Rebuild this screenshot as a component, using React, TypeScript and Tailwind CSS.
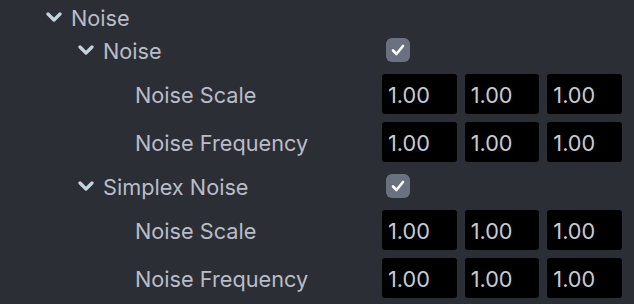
import React from 'react';

const Chevron = () => (
  <svg width="16" height="10" viewBox="0 0 16 10" className="shrink-0">
    <path d="M2 2 L8 8 L14 2" fill="none" stroke="#c5d3df" strokeWidth="3.2" strokeLinecap="round" strokeLinejoin="round" />
  </svg>
);

const Checkbox = () => (
  <div className="ml-1 flex h-6 w-6 items-center justify-center rounded-[6px] bg-[#6c7181]">
    <svg width="14" height="12" viewBox="0 0 14 12">
      <path d="M2 6.5 L5.5 10 L12 2" fill="none" stroke="#ffffff" strokeWidth="2.6" strokeLinecap="round" strokeLinejoin="round" />
    </svg>
  </div>
);

const Group = ({ label, indent }: { label: string; indent: string }) => (
  <div className="flex h-8 items-center">
    <div className={`flex w-[382px] items-center gap-[9px] ${indent}`}>
      <Chevron />
      <span className="pt-[2px]">{label}</span>
    </div>
    <Checkbox />
  </div>
);

const VectorRow = ({ label }: { label: string }) => (
  <div className="flex h-10 items-center">
    <div className="w-[382px] pl-[135px] pt-[2px]">{label}</div>
    <div className="grid w-[240px] grid-cols-3 gap-2">
      {['1.00', '1.00', '1.00'].map((v, i) => (
        <div key={i} className="flex h-10 items-center rounded-[3px] bg-black pl-[6px] pt-[2px] text-[#c9cbd0]">
          {v}
        </div>
      ))}
    </div>
  </div>
);

export default function App() {
  return (
    <div className="h-[304px] w-[634px] overflow-hidden bg-[#2c2e36] font-['Inter',sans-serif] text-[21.7px] text-[#b9bdc6]">
      <div className="flex flex-col gap-2 pt-[1px]">
        <div className="-mb-[7px] flex h-8 items-center gap-[9px] pl-[46px]">
          <Chevron />
          <span className="pt-[2px]">Noise</span>
        </div>
        <Group label="Noise" indent="pl-[78px]" />
        <VectorRow label="Noise Scale" />
        <VectorRow label="Noise Frequency" />
        <Group label="Simplex Noise" indent="pl-[78px]" />
        <VectorRow label="Noise Scale" />
        <VectorRow label="Noise Frequency" />
      </div>
    </div>
  );
}
